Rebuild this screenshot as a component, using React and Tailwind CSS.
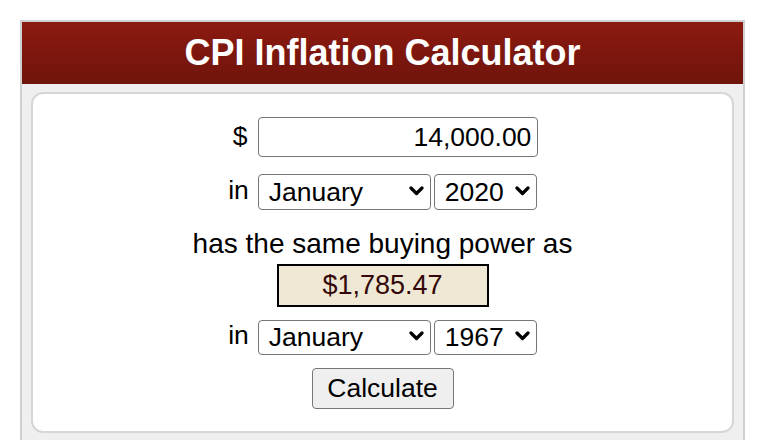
// CPI enflasyon hesaplayıcısı
import { useState } from 'react';

const MONTHS = ['January', 'February', 'March', 'April', 'May', 'June', 'July', 'August', 'September', 'October', 'November', 'December'];

function Chevron() {
  return (
    <svg width="15" height="10" viewBox="0 0 15 10" className="pointer-events-none absolute right-[7px] top-1/2 -translate-y-1/2">
      <path d="M2 2 L7.5 7.5 L13 2" fill="none" stroke="#000" strokeWidth="3.2" strokeLinecap="round" strokeLinejoin="round" />
    </svg>
  );
}

function Select({ value, options, onChange, width }) {
  return (
    <div className={`relative ${width}`}>
      <select
        value={value}
        onChange={e => onChange(e.target.value)}
        className="h-full w-full appearance-none rounded-[4px] border border-[#767676] bg-white pl-[10px] pr-6 text-[26.5px] leading-none text-black outline-none"
      >
        {options.map(o => <option key={o} value={o}>{o}</option>)}
      </select>
      <Chevron />
    </div>
  );
}

export default function App() {
  const [amount, setAmount] = useState('14,000.00');
  const [m1, setM1] = useState('January');
  const [y1, setY1] = useState('2020');
  const [m2, setM2] = useState('January');
  const [y2, setY2] = useState('1967');
  const years = Array.from({ length: 2020 - 1913 + 1 }, (_, i) => String(2020 - i));

  return (
    <div className="min-h-[440px] bg-white pl-[20px] pt-[20px]" style={{ fontFamily: '"Liberation Sans", Arial, sans-serif' }}>
      <div className="w-[725px] border-2 border-b-0 border-[#d0d0d0] bg-[#efefef]">
        <div className="flex h-[62px] items-center justify-center bg-gradient-to-b from-[#8c1a10] to-[#6f140c]">
          <h1 className="text-[36px] font-bold text-white">CPI Inflation Calculator</h1>
        </div>
        <div className="px-[9px] pt-[8px] pb-[8px]">
          <div className="flex flex-col items-center rounded-[12px] border-2 border-[#d6d6d6] bg-white pt-[23px] pb-[22px] text-[26.5px] text-black">
            <div className="flex h-[40px] items-center gap-[11px] pl-[6px]">
              <span>$</span>
              <input
                value={amount}
                onChange={e => setAmount(e.target.value)}
                className="h-full w-[280px] rounded-[4px] border border-[#767676] px-[6px] text-right text-[26.5px] outline-none"
              />
            </div>
            <div className="mt-[16px] flex h-[36px] items-center">
              <span className="mr-[9px]">in</span>
              <Select value={m1} options={MONTHS} onChange={setM1} width="h-full w-[173px]" />
              <div className="w-[3px]" />
              <Select value={y1} options={years} onChange={setY1} width="h-full w-[103px]" />
            </div>
            <p className="mt-[19px] text-[28px] leading-[31px]">has the same buying power as</p>
            <div className="mt-[5px] flex h-[43px] w-[212px] items-center justify-center border-2 border-black bg-[#eee8d4] text-[27px] text-[#340808]">
              $1,785.47
            </div>
            <div className="mt-[11px] flex h-[35px] items-center">
              <span className="mr-[9px]">in</span>
              <Select value={m2} options={MONTHS} onChange={setM2} width="h-full w-[173px]" />
              <div className="w-[3px]" />
              <Select value={y2} options={years} onChange={setY2} width="h-full w-[103px]" />
            </div>
            <button className="mt-[15px] h-[41px] w-[142px] rounded-[4px] border border-[#767676] bg-[#efefef] text-[26.5px] text-black">
              Calculate
            </button>
          </div>
        </div>
      </div>
    </div>
  );
}
